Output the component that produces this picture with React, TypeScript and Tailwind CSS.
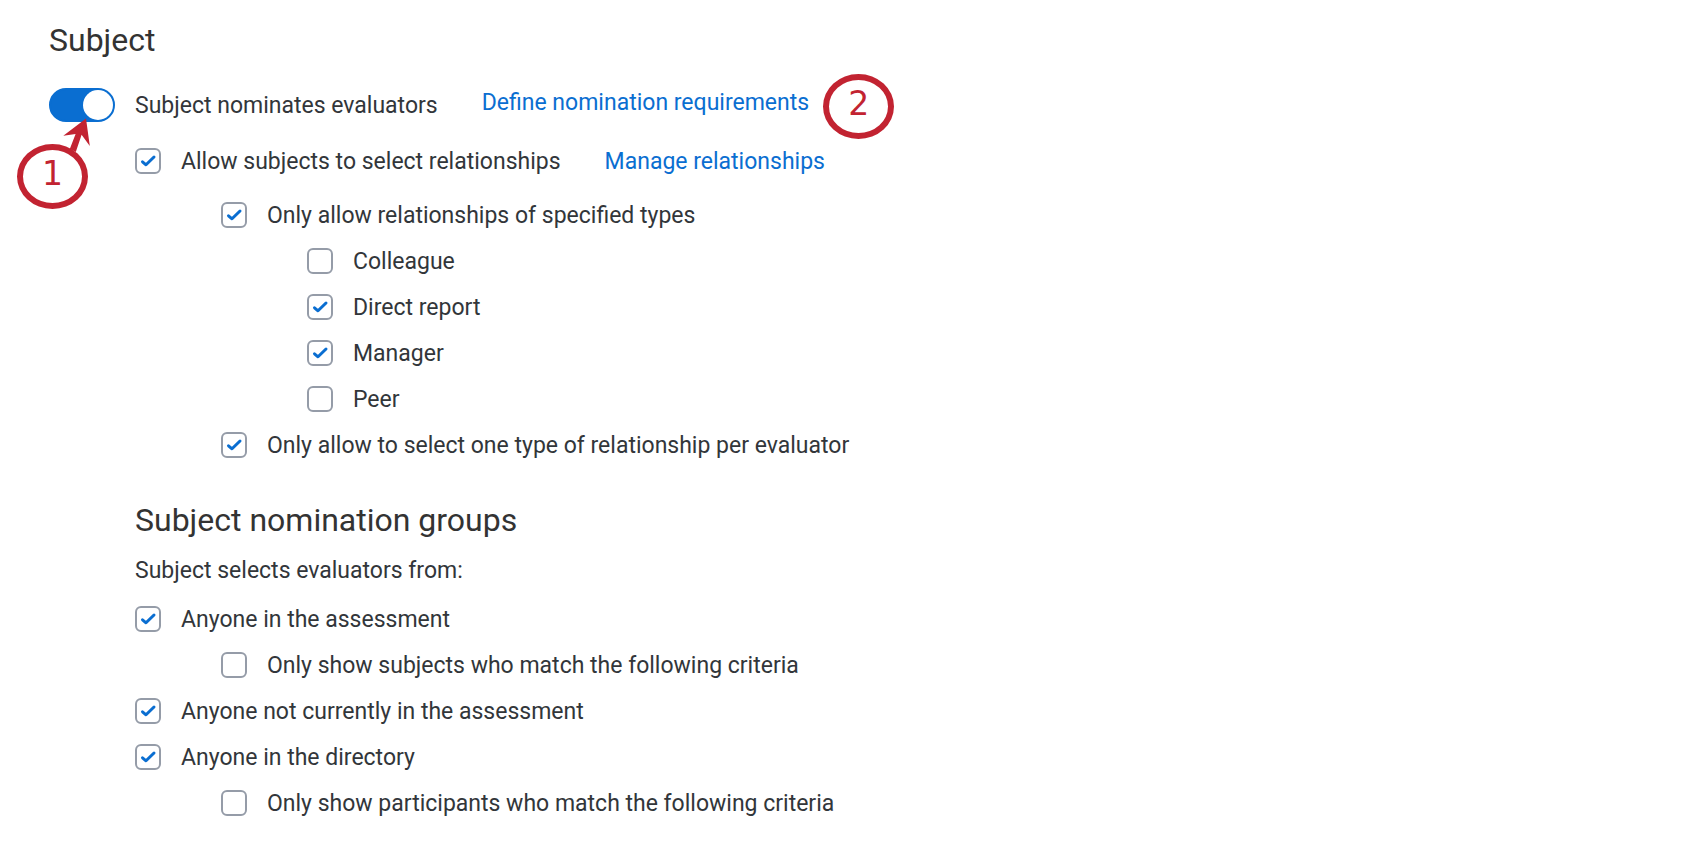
import { useState } from "react";
import type { ReactNode } from "react";

type CheckRowProps = {
  label: string;
  checked?: boolean;
  children?: ReactNode;
};

const CheckRow = ({ label, checked = false, children }: CheckRowProps) => {
  const [on, setOn] = useState(checked);

  return (
    <div className="flex items-center min-h-[46px] gap-11">
      <label className="flex items-center gap-5 cursor-pointer">
        <span className="grid shrink-0">
          <input
            type="checkbox"
            checked={on}
            onChange={() => setOn(!on)}
            className="peer col-start-1 row-start-1 appearance-none w-[26px] h-[26px] rounded-md border-2 border-[#959ca8] bg-white"
          />
          <svg
            viewBox="0 0 26 26"
            className="col-start-1 row-start-1 w-[26px] h-[26px] invisible peer-checked:visible pointer-events-none"
            fill="none"
            stroke="#0a6ed1"
            strokeWidth="3"
            strokeLinecap="round"
            strokeLinejoin="round"
          >
            <path d="M7.5 13.8 L11 16.8 L19 9" />
          </svg>
        </span>
        <span className="pt-0.5">{label}</span>
      </label>
      {children}
    </div>
  );
};

const Marker = ({ number }: { number: number }) => {
  return (
    <span className="flex items-center justify-center w-[71px] h-[65px] rounded-[50%] border-6 border-[#c22331] bg-white pb-1.5 font-['DejaVu_Sans',sans-serif] text-[33px] leading-none text-[#c22331]">
      {number}
    </span>
  );
};

const App = () => {
  const [nominates, setNominates] = useState(true);

  return (
    <main className="min-h-screen bg-white pt-4 pb-6 pl-[49px] pr-6 font-[Roboto,sans-serif] text-[23px] leading-[30px] text-[#32363a]">
      <h2 className="text-[32px] leading-[48px] text-[#333333]">Subject</h2>

      {/* Toggle row */}
      <div className="flex items-start gap-11 pt-6 pb-4">
        <div className="flex items-center gap-5">
          <div className="relative">
            <input
              id="nominates"
              type="checkbox"
              role="switch"
              checked={nominates}
              onChange={() => setNominates(!nominates)}
              className="block appearance-none w-[66px] h-[34px] rounded-full border-2 border-[#0a6ed1] bg-[#959ca8] checked:bg-[#0a6ed1] before:block before:w-[30px] before:h-[30px] before:rounded-full before:bg-white checked:before:ml-8"
            />
            <div className="absolute -left-8 top-14 z-10">
              <Marker number={1} />
            </div>
            <svg
              viewBox="0 0 28 36"
              className="absolute left-3.5 top-[29px] z-20 w-7 h-9 pointer-events-none"
              fill="#c22331"
            >
              <path d="M23 1.5 L26.8 29 L18.6 17.8 L12.8 35 L6.8 32 L12.6 17 L0.3 18.7 Z" />
            </svg>
          </div>
          <label htmlFor="nominates" className="pt-0.5">
            Subject nominates evaluators
          </label>
        </div>
        <div className="relative">
          <a href="#requirements" className="text-[#0a6ed1]">
            Define nomination requirements
          </a>
          <div className="absolute left-full -top-3.5 ml-3.5">
            <Marker number={2} />
          </div>
        </div>
      </div>

      <div className="pl-[86px]">
        <CheckRow label="Allow subjects to select relationships" checked>
          <a href="#relationships" className="pt-0.5 text-[#0a6ed1]">
            Manage relationships
          </a>
        </CheckRow>

        <div className="pl-[86px] pt-2">
          <CheckRow label="Only allow relationships of specified types" checked />
          <div className="pl-[86px]">
            <CheckRow label="Colleague" />
            <CheckRow label="Direct report" checked />
            <CheckRow label="Manager" checked />
            <CheckRow label="Peer" />
          </div>
          <CheckRow label="Only allow to select one type of relationship per evaluator" checked />
        </div>

        {/* Nomination groups */}
        <h2 className="pt-7 text-[32px] leading-[48px] text-[#333333]">Subject nomination groups</h2>
        <p className="pt-3 pb-2.5">Subject selects evaluators from:</p>
        <CheckRow label="Anyone in the assessment" checked />
        <div className="pl-[86px]">
          <CheckRow label="Only show subjects who match the following criteria" />
        </div>
        <CheckRow label="Anyone not currently in the assessment" checked />
        <CheckRow label="Anyone in the directory" checked />
        <div className="pl-[86px]">
          <CheckRow label="Only show participants who match the following criteria" />
        </div>
      </div>
    </main>
  );
};

export default App;
